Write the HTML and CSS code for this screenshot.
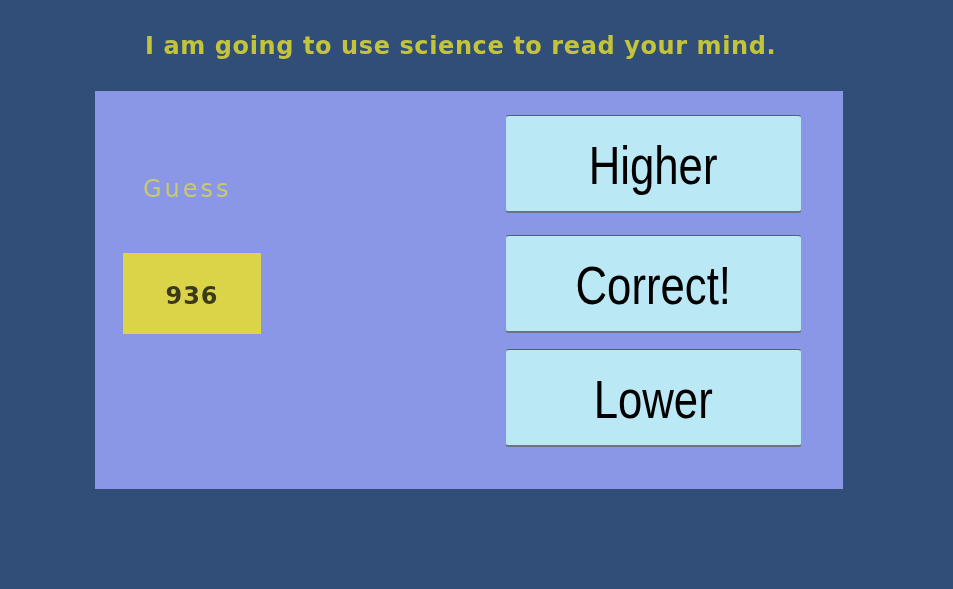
FILE: index.html
```html
<!DOCTYPE html>
<html>
<head>
<meta charset="utf-8">
<link rel="stylesheet" href="styles.css">
</head>
<body>
<div class="title">I am going to use science to read your mind.</div>
<div class="panel">
  <div class="left">
    <div class="label">Guess</div>
    <div class="guess"><span class="num">936</span></div>
  </div>
  <div class="buttons">
    <div class="btn b1"><span class="cap">Higher</span></div>
    <div class="btn b2"><span class="cap">Correct!</span></div>
    <div class="btn b3"><span class="cap">Lower</span></div>
  </div>
</div>
</body>
</html>
```
FILE: styles.css
```css
html, body { margin: 0; padding: 0; }
body {
  background: #304e78;
  width: 953px;
  height: 589px;
  overflow: hidden;
  font-family: "DejaVu Sans", sans-serif;
}
.title {
  height: 91px;
  box-sizing: border-box;
  padding: 32px 0 0 145px;
  font-size: 24px;
  font-weight: bold;
  line-height: 28px;
  color: #c4c43c;
  letter-spacing: 0.6px;
  white-space: nowrap;
  filter: blur(0.7px);
}
.panel {
  margin-left: 95px;
  width: 748px;
  height: 398px;
  background: #8a96e6;
  display: flex;
}
.left {
  width: 410px;
  padding-left: 28px;
  box-sizing: border-box;
}
.label {
  margin: 85px 0 0 20px;
  height: 26px;
  font-size: 24px;
  line-height: 26px;
  color: #c8ca6c;
  letter-spacing: 3px;
  filter: blur(0.6px);
}
.guess {
  margin-top: 51px;
  width: 138px;
  height: 81px;
  background: #dcd448;
  display: flex;
  align-items: center;
  justify-content: center;
}
.num {
  color: #3a3a1a;
  font-size: 24px;
  font-weight: bold;
  letter-spacing: 1px;
  padding-top: 4px;
  filter: blur(0.7px);
}
.buttons {
  padding-top: 24px;
  display: flex;
  flex-direction: column;
}
.btn {
  width: 297px;
  height: 98px;
  box-sizing: border-box;
  background: #bbe8f5;
  border: 1px solid #8aa0b0;
  border-top: 1px solid #4d6275;
  border-bottom: 2px solid #6a7480;
  border-radius: 4px;
  display: flex;
  align-items: center;
  justify-content: center;
  font-family: "Liberation Sans", "Arial", sans-serif;
  font-size: 53px;
  color: #000;
  padding-top: 3px;
}
.cap {
  display: inline-block;
  transform: scaleX(0.825);
  white-space: nowrap;
}
.b2 { margin-top: 22px; }
.b3 { margin-top: 16px; }
```
